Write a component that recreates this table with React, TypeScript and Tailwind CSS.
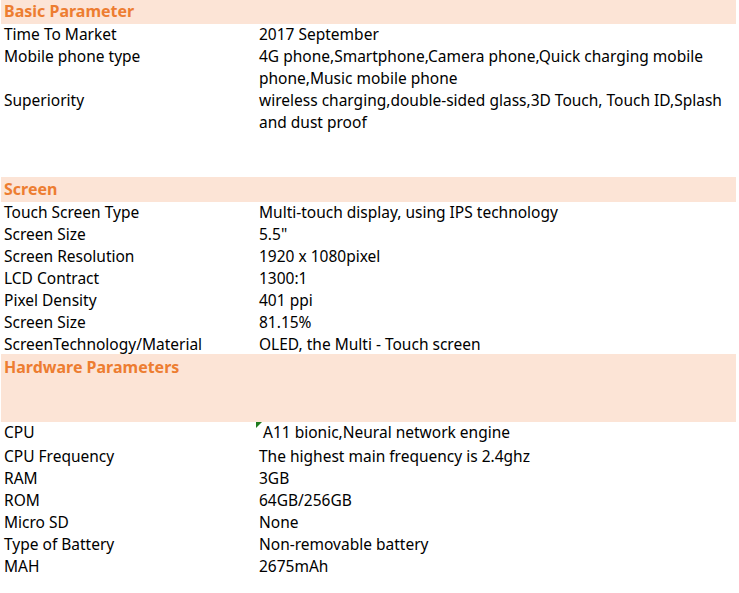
import React from "react";

type Row = { k: string; v: React.ReactNode; h?: string };

const Header = ({ title, h }: { title: string; h: string }) => (
  <div className={`bg-[#fce4d6] ${h} pl-[3px] text-[16px] font-bold text-[#ed7d31]`}>
    {title}
  </div>
);

const Line = ({ k, v, h = "h-[22px]" }: Row) => (
  <div className={`grid grid-cols-[255px_1fr] ${h}`}>
    <div className="pl-[3px] -mt-[1px]">{k}</div>
    <div className="pl-[3px] pr-[6px] -mt-[1px]">{v}</div>
  </div>
);

export default function App() {
  return (
    <div
      className="w-[739px] h-[593px] bg-white text-black text-[15.5px] leading-[22px] overflow-hidden"
      style={{ fontFamily: '"Noto Sans", "Open Sans", sans-serif' }}
    >
      <div className="ml-[1px] w-[735px]">
        <Header title="Basic Parameter" h="h-[24px] leading-[23px]" />
        <Line k="Time To Market" v="2017 September" />
        <Line
          k="Mobile phone type"
          h="h-[44px]"
          v="4G phone,Smartphone,Camera phone,Quick charging mobile phone,Music mobile phone"
        />
        <Line
          k="Superiority"
          h="h-[87px]"
          v="wireless charging,double-sided glass,3D Touch, Touch ID,Splash and dust proof"
        />
        <Header title="Screen" h="h-[25px] leading-[25px]" />
        <Line k="Touch Screen Type" v="Multi-touch display, using IPS technology" />
        <Line k="Screen Size" v={'5.5"'} />
        <Line k="Screen Resolution" v="1920 x 1080pixel" />
        <Line k="LCD Contract" v="1300:1" />
        <Line k="Pixel Density" v="401 ppi" />
        <Line k="Screen Size" v="81.15%" />
        <Line k="ScreenTechnology/Material" v="OLED, the Multi - Touch screen" h="h-[20px]" />
        <Header title="Hardware Parameters" h="h-[68px] leading-[26px]" />
        <div className="grid grid-cols-[255px_1fr] h-[24px]">
          <div className="pl-[3px] -mt-[1px]">CPU</div>
          <div className="relative pl-[7px]">
            <span className="absolute left-0 top-0 w-0 h-0 border-t-[6px] border-t-[#1e7b1e] border-r-[6px] border-r-transparent" />
            <div className="-mt-[1px]">A11 bionic,Neural network engine</div>
          </div>
        </div>
        <Line k="CPU Frequency" v="The highest main frequency is 2.4ghz" />
        <Line k="RAM" v="3GB" />
        <Line k="ROM" v="64GB/256GB" />
        <Line k="Micro SD" v="None" />
        <Line k="Type of Battery" v="Non-removable battery" />
        <Line k="MAH" v="2675mAh" />
      </div>
    </div>
  );
}
